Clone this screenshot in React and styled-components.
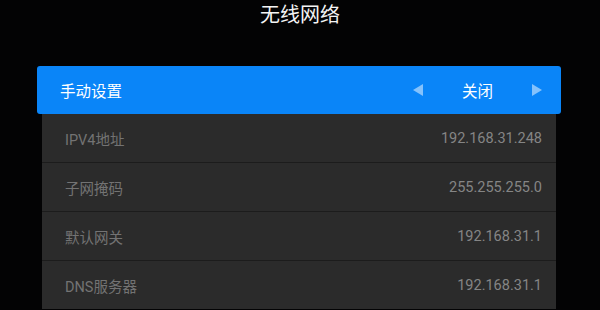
import React from 'react';
import styled, { createGlobalStyle } from 'styled-components';

const GlobalStyle = createGlobalStyle`
  html, body {
    margin: 0;
    padding: 0;
    background: #030304;
  }
  body {
    font-family: Roboto, "Noto Sans CJK SC", "Noto Sans", sans-serif;
  }
`;

const Screen = styled.div`
  width: 600px;
  height: 310px;
  overflow: hidden;
  background: #030304;
  display: flex;
  flex-direction: column;
`;

const Title = styled.h1`
  margin: 0;
  height: 30px;
  line-height: 30px;
  font-size: 20px;
  font-weight: 400;
  color: #f4f4f4;
  text-align: center;
`;

const Menu = styled.div`
  margin-top: 36px;
  display: flex;
  flex-direction: column;
`;

const ActiveRow = styled.div`
  margin: 0 39px 0 37px;
  height: 48px;
  border-radius: 3px;
  background: #0a85f8;
  display: flex;
  align-items: center;
  justify-content: space-between;
  padding: 0 19px 0 23px;
  color: #fff;
  font-size: 15.5px;
`;

const Selector = styled.div`
  display: flex;
  align-items: center;
`;

const Arrow = styled.span`
  width: 0;
  height: 0;
  border-top: 6px solid transparent;
  border-bottom: 6px solid transparent;
  ${({ dir }) =>
    dir === 'left'
      ? 'border-right: 10px solid rgba(255, 255, 255, 0.5);'
      : 'border-left: 10px solid rgba(255, 255, 255, 0.5);'}
`;

const Value = styled.span`
  width: 109px;
  text-align: center;
`;

const Panel = styled.div`
  margin: 0 44px 0 42px;
  background: #2b2b2b;
  display: flex;
  flex-direction: column;
`;

const InfoRow = styled.div`
  height: 48px;
  display: flex;
  align-items: center;
  justify-content: space-between;
  padding: 0 14px 0 23px;
  font-size: 14.5px;
  border-bottom: 1px solid #1c1c1c;

  &:last-child {
    border-bottom: none;
  }
`;

const Label = styled.span`
  color: #737373;
`;

const Info = styled.span`
  color: #858585;
`;

const rows = [
  { label: 'IPV4地址', value: '192.168.31.248' },
  { label: '子网掩码', value: '255.255.255.0' },
  { label: '默认网关', value: '192.168.31.1' },
  { label: 'DNS服务器', value: '192.168.31.1' },
];

const App = () => (
  <Screen>
    <GlobalStyle />
    <Title>无线网络</Title>
    <Menu>
      <ActiveRow>
        <span>手动设置</span>
        <Selector>
          <Arrow dir="left" />
          <Value>关闭</Value>
          <Arrow dir="right" />
        </Selector>
      </ActiveRow>
      <Panel>
        {rows.map((r) => (
          <InfoRow key={r.label}>
            <Label>{r.label}</Label>
            <Info>{r.value}</Info>
          </InfoRow>
        ))}
      </Panel>
    </Menu>
  </Screen>
);

export default App;
